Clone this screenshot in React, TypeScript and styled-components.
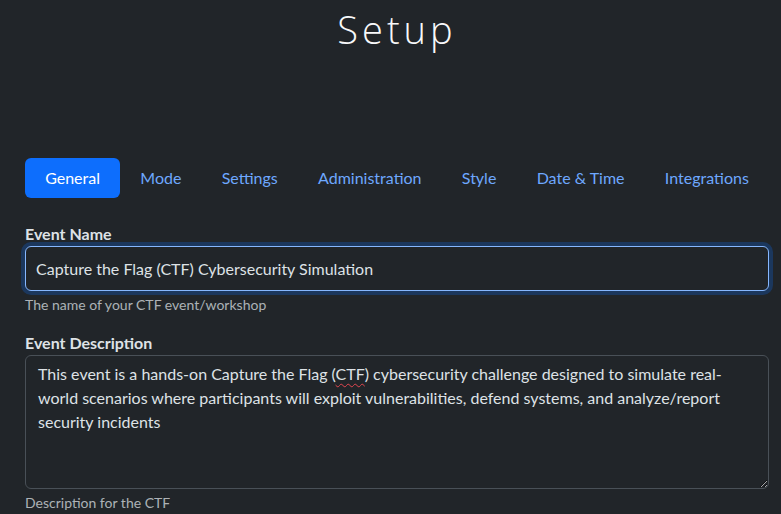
import React, {useEffect, useRef, useState} from 'react'
import styled, {createGlobalStyle} from 'styled-components'

const GlobalStyle = createGlobalStyle`
  html, body {
    margin: 0;
    padding: 0;
    background: #212529;
  }
  body {
    font-family: Lato, "Liberation Sans", sans-serif;
    color: #dee2e6;
  }
  * {
    box-sizing: border-box;
  }
`

const Page = styled.main`
  min-height: 514px;
  padding: 6px 12px 0 25px;
`

const Title = styled.h1`
  margin: 0 0 106px;
  font-family: "Open Sans", sans-serif;
  font-weight: 300;
  font-size: 38px;
  line-height: 46px;
  letter-spacing: 4px;
  color: #f8f9fa;
  text-align: center;
`

const Tabs = styled.nav`
  display: flex;
  margin-bottom: 24px;
`

const Tab = styled.a<{$active?: boolean}>`
  flex: 1 1 auto;
  padding: 8px 16px;
  font-size: 16px;
  line-height: 24px;
  text-align: center;
  text-decoration: none;
  border-radius: 6px;
  cursor: pointer;
  color: ${p => (p.$active ? '#fff' : '#6ea8fe')};
  background: ${p => (p.$active ? '#0d6efd' : 'transparent')};
`

const Field = styled.div`
  display: flex;
  flex-direction: column;
  margin-bottom: 16px;
`

const Label = styled.label`
  font-weight: 700;
  font-size: 16px;
  line-height: 24px;
  color: #dee2e6;
`

const TextInput = styled.input`
  width: 100%;
  height: 45px;
  padding: 9px 10px;
  font-family: Lato, sans-serif;
  font-size: 16px;
  line-height: 24px;
  color: #dee2e6;
  background: #212529;
  border: 1px solid #86b7fe;
  border-radius: 6px;
  box-shadow: 0 0 0 4px rgba(13, 110, 253, 0.25);
  outline: none;
  caret-color: #dee2e6;
`

const TextArea = styled.div`
  width: 100%;
  height: 134px;
  padding: 6px 12px;
  font-size: 16px;
  line-height: 24px;
  color: #dee2e6;
  background: #212529;
  border: 1px solid #495057;
  border-radius: 6px;
  overflow: auto;
  resize: vertical;
  white-space: pre-wrap;
`

const Misspelled = styled.span`
  text-decoration: underline wavy #e2464f;
  text-decoration-thickness: 1px;
  text-underline-offset: 3px;
`

const Help = styled.div`
  margin-top: 3px;
  font-size: 14px;
  line-height: 21px;
  color: rgba(222, 226, 230, 0.75);
`

const tabs = ['General', 'Mode', 'Settings', 'Administration', 'Style', 'Date & Time', 'Integrations']

export default function App() {
  const [active, setActive] = useState('General')
  const [name, setName] = useState('Capture the Flag (CTF) Cybersecurity Simulation')
  const nameRef = useRef<HTMLInputElement>(null)

  useEffect(() => {
    const el = nameRef.current
    if (el) {
      el.focus()
      el.setSelectionRange(el.value.length, el.value.length)
    }
  }, [])

  return (
    <Page>
      <GlobalStyle />
      <Title>Setup</Title>

      <Tabs>
        {tabs.map(t => (
          <Tab key={t} $active={t === active} onClick={() => setActive(t)}>
            {t}
          </Tab>
        ))}
      </Tabs>

      <Field>
        <Label htmlFor="event-name">Event Name</Label>
        <TextInput
          id="event-name"
          ref={nameRef}
          value={name}
          onChange={e => setName(e.target.value)}
        />
        <Help>The name of your CTF event/workshop</Help>
      </Field>

      <Field>
        <Label>Event Description</Label>
        <TextArea>
          This event is a hands-on Capture the Flag (<Misspelled>CTF</Misspelled>) cybersecurity challenge designed to simulate real-world scenarios where participants will exploit vulnerabilities, defend systems, and analyze/report security incidents
        </TextArea>
        <Help>Description for the CTF</Help>
      </Field>
    </Page>
  )
}
